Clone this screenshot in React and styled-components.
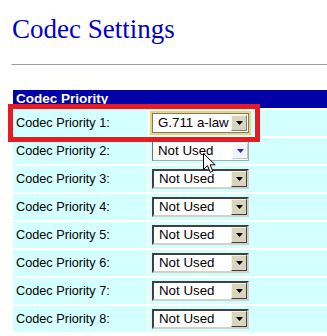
import React from "react";
import styled, { createGlobalStyle, css } from "styled-components";

const GlobalStyle = createGlobalStyle`
  html, body {
    margin: 0;
    padding: 0;
    background: #ffffff;
    overflow: hidden;
  }
`;

const codecs = [
  { label: "Codec Priority 1:", value: "G.711 a-law", state: "focus" },
  { label: "Codec Priority 2:", value: "Not Used", state: "hover" },
  { label: "Codec Priority 3:", value: "Not Used" },
  { label: "Codec Priority 4:", value: "Not Used" },
  { label: "Codec Priority 5:", value: "Not Used" },
  { label: "Codec Priority 6:", value: "Not Used" },
  { label: "Codec Priority 7:", value: "Not Used" },
  { label: "Codec Priority 8:", value: "Not Used" },
];

const DropArrow = ({ color }) => (
  <svg width="7" height="4" viewBox="0 0 7 4">
    <path d="M0 0H7L3.5 4Z" fill={color} />
  </svg>
);

const Cursor = () => (
  <svg width="13" height="20" viewBox="0 0 13 20">
    <path
      d="M0.5 0.5V16.5L4.5 12.7L7.3 19.3L9.8 18.2L7.1 11.8H12.2Z"
      fill="#fff"
      stroke="#000"
      strokeWidth="1"
    />
  </svg>
);

const App = () => {
  return (
    <Page>
      <GlobalStyle />
      <Title>Codec Settings</Title>
      <Rule />
      <Table>
        <Header>Codec Priority</Header>
        {codecs.map((c) => (
          <React.Fragment key={c.label}>
            <LabelCell>{c.label}</LabelCell>
            <ValueCell>
              <Select $state={c.state}>
                <SelectText>{c.value}</SelectText>
                <SelectButton $state={c.state}>
                  <DropArrow color={c.state === "hover" ? "#1a2ed0" : "#000"} />
                </SelectButton>
              </Select>
            </ValueCell>
          </React.Fragment>
        ))}
      </Table>
      <Highlight />
      <Pointer>
        <Cursor />
      </Pointer>
    </Page>
  );
};

export default App;

const Page = styled.div`
  position: relative;
  width: 327px;
  height: 336px;
  overflow: hidden;
  font-family: "Liberation Sans", Arial, sans-serif;
`;

const Title = styled.h1`
  margin: 0;
  padding: 16px 0 0 12px;
  font-family: "Liberation Serif", "Times New Roman", serif;
  font-size: 27px;
  line-height: 27px;
  font-weight: normal;
  color: #0000c8;
`;

const Rule = styled.div`
  margin: 21px 0 0 11px;
  height: 1px;
  background: #9898b4;
  border-left: 1px solid #c8c8d8;
`;

const Table = styled.div`
  display: grid;
  grid-template-columns: 134px 1fr;
  gap: 2px;
  margin: 25px 0 0 13px;
`;

const Header = styled.div`
  grid-column: 1 / -1;
  height: 18px;
  line-height: 18px;
  padding-left: 3px;
  background: #0000a8;
  color: #ffffff;
  font-weight: bold;
  font-size: 13.5px;
`;

const LabelCell = styled.div`
  height: 26px;
  line-height: 26px;
  padding-left: 3px;
  background: #d4ffff;
  color: #000;
  font-size: 12.7px;
`;

const ValueCell = styled.div`
  height: 26px;
  box-sizing: border-box;
  padding: 3px 0 0 3px;
  background: #d4ffff;
`;

const Select = styled.div`
  box-sizing: border-box;
  width: 97px;
  height: 20px;
  display: flex;
  align-items: center;
  background: #ffffff;
  border-style: solid;
  border-width: 2px;
  border-color: #404040 #d4d0c8 #d4d0c8 #404040;

  ${(p) =>
    p.$state === "focus" &&
    css`
      border: 1px solid #7a7a7a;
      box-shadow: 0 0 0 2px #f4d26c, inset 0 0 0 1px #fff;
    `}

  ${(p) =>
    p.$state === "hover" &&
    css`
      border: 1px solid #6e6e80;
      border-right-color: #a8a8b8;
      border-bottom-color: #a8a8b8;
    `}
`;

const SelectText = styled.span`
  flex: 1;
  padding-left: 5px;
  font-size: 13.3px;
  line-height: 16px;
  color: #000;
  white-space: nowrap;
  overflow: hidden;
`;

const SelectButton = styled.div`
  box-sizing: border-box;
  width: 16px;
  height: 16px;
  display: flex;
  align-items: center;
  justify-content: center;
  background: #d8d5bc;
  border-style: solid;
  border-width: 1px;
  border-color: #f4f2e6 #404040 #404040 #f4f2e6;

  ${(p) =>
    p.$state === "focus" &&
    css`
      margin-right: 1px;
      border-color: #f4f2e6 #808080 #808080 #f4f2e6;
    `}

  ${(p) =>
    p.$state === "hover" &&
    css`
      background: #f2f4fb;
      border-color: #ffffff #c0c4d8 #c0c4d8 #ffffff;
    `}
`;

const Highlight = styled.div`
  position: absolute;
  left: 8px;
  top: 104px;
  width: 252px;
  height: 38px;
  box-sizing: border-box;
  border: 5px solid #e51c24;
  pointer-events: none;
`;

const Pointer = styled.div`
  position: absolute;
  left: 203px;
  top: 153px;
  line-height: 0;
`;
